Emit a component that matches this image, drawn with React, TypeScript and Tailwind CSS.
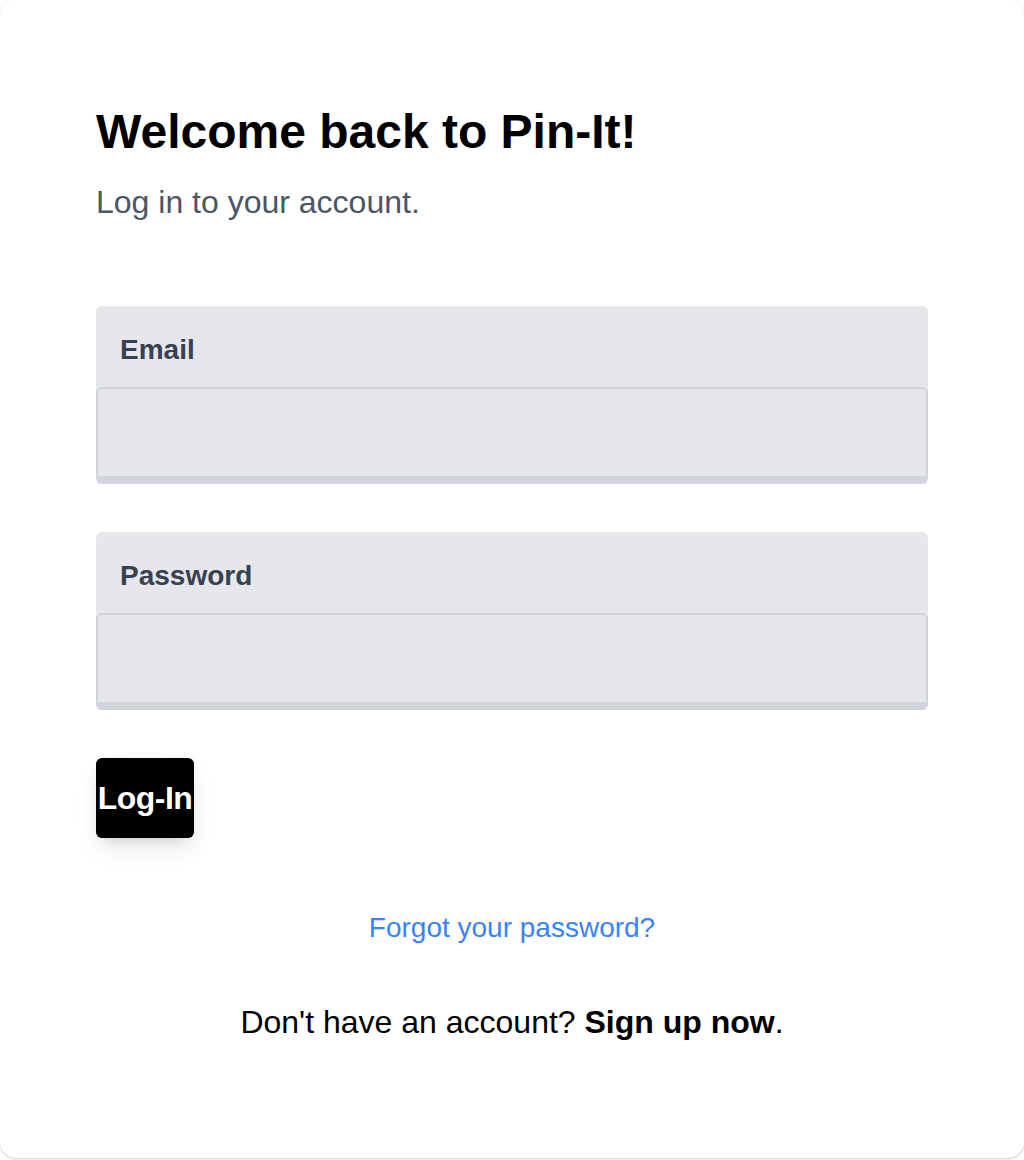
import React from "react";

function Field({ label, type }: { label: string; type: string }) {
  return (
    <div className="rounded-md bg-[#e5e7eb]">
      <label className="block px-6 pt-[26px] pb-[19px] text-[28px] leading-[36px] font-bold text-[#374151]">
        {label}
      </label>
      <input
        type={type}
        className="block h-[97px] w-full rounded-md border-2 border-b-8 border-[#d1d5db] bg-[#e5e7eb] outline-none"
      />
    </div>
  );
}

export default function App() {
  return (
    <div className="min-h-screen bg-white" style={{ fontFamily: '"Liberation Sans", Arial, sans-serif' }}>
      <div className="h-[1158px] rounded-2xl bg-white px-24 pt-[102px] shadow-[0_1px_3px_rgba(0,0,0,0.14),0_1px_2px_rgba(0,0,0,0.08)]">
        <h1 className="text-[48px] leading-[60px] font-bold text-black">Welcome back to Pin-It!</h1>
        <p className="mt-5 text-[32px] leading-[40px] text-[#4b5563]">Log in to your account.</p>
        <form className="mt-[84px] flex flex-col gap-12">
          <Field label="Email" type="email" />
          <Field label="Password" type="password" />
          <div>
            <button
              type="button"
              className="flex h-20 w-[98px] items-center justify-center rounded-md bg-black text-[32px] font-bold tracking-[-0.5px] text-white shadow-[0_12px_24px_-4px_rgba(0,0,0,0.12),0_6px_10px_-6px_rgba(0,0,0,0.12)]"
            >
              Log-In
            </button>
          </div>
        </form>
        <p className="mt-[72px] text-center text-[28px] leading-[36px] text-[#3b82f6]">Forgot your password?</p>
        <p className="mt-[56px] text-center text-[32px] leading-[40px] text-black">
          Don't have an account? <span className="font-bold">Sign up now</span>.
        </p>
      </div>
    </div>
  );
}
